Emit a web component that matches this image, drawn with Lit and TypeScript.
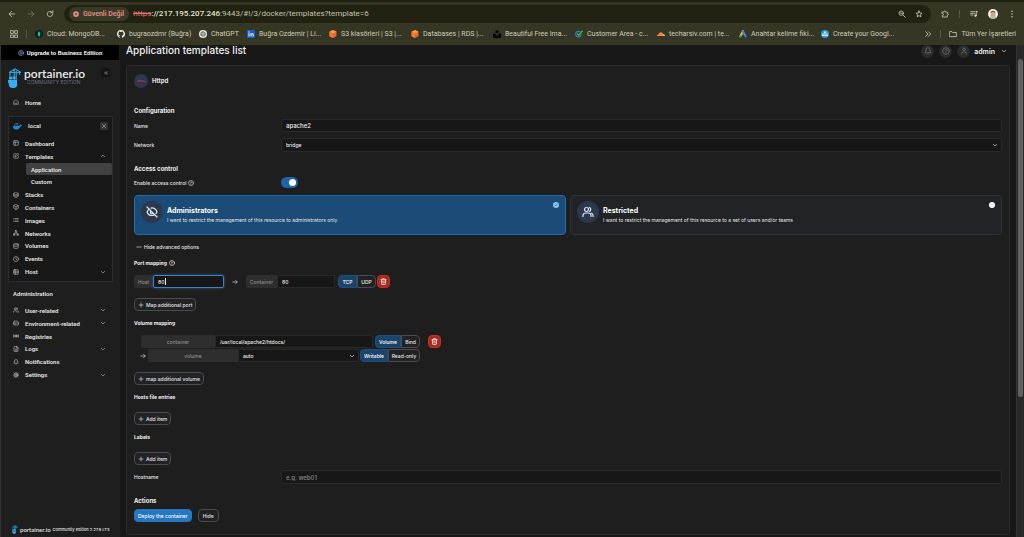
import { LitElement, html, css, svg, nothing } from "lit";
import { customElement, property } from "lit/decorators.js";

const glyphs: Record<string, unknown> = {
  back: svg`<path d="M20 12H4M11 4l-8 8 8 8"/>`,
  forward: svg`<path d="M4 12h16M13 4l8 8-8 8"/>`,
  reload: svg`<path d="M20 12a8 8 0 1 1-2.5-5.800"/><path d="M20.500 2v6.500H14" />`,
  grid: svg`<rect x="2" y="2" width="8" height="8"/><rect x="15" y="2" width="8" height="8"/><rect x="2" y="15" width="8" height="8"/><rect x="15" y="15" width="8" height="8"/>`,
  zoomOut: svg`<circle cx="9.500" cy="9.500" r="6.500"/><path d="M14.500 14.500 22 22M6.500 9.500h6"/>`,
  star: svg`<path d="m12 3 2.700 6 6.500.6-4.900 4.300 1.500 6.400L12 16.900l-5.800 3.400 1.500-6.400L2.800 9.600 9.300 9z"/>`,
  puzzle: svg`<path d="M4 6h5V5a2 2 0 0 1 4 0v1h6v5h1a2 2 0 0 1 0 4h-1v6H4v-5h1a2.500 2.500 0 0 0 0-5H4z"/>`,
  playlist: svg`<path d="M2 5h13M2 10h13M2 15h7M19 4v12M19 5h4"/><circle cx="16.500" cy="17" r="2.500" fill="currentColor"/>`,
  more: svg`<g fill="currentColor" stroke="none"><circle cx="12" cy="4" r="2.200"/><circle cx="12" cy="12" r="2.200"/><circle cx="12" cy="20" r="2.200"/></g>`,
  folder: svg`<path d="M2 5h7l2 2.500h11V20H2z"/>`,
  chevrons: svg`<path d="m5 5 7 7-7 7M13 5l7 7-7 7"/>`,
  chevronsLeft: svg`<path d="m11 17-5-5 5-5M18 17l-5-5 5-5"/>`,
  down: svg`<path d="m5 9 7 7 7-7"/>`,
  up: svg`<path d="m5 15 7-7 7 7"/>`,
  close: svg`<path d="M18 6 6 18M6 6l12 12"/>`,
  plusCircle: svg`<circle cx="12" cy="12" r="10"/><path d="M12 7v10M7 12h10"/>`,
  home: svg`<path d="M3 10 12 3l9 7v11H3zM8 17h8"/>`,
  layout: svg`<rect x="3" y="3" width="18" height="18" rx="2"/><path d="M3 9h18M9 21V9"/>`,
  edit: svg`<path d="M12 3H5a2 2 0 0 0-2 2v14a2 2 0 0 0 2 2h14a2 2 0 0 0 2-2v-7"/><path d="M18.400 2.600a2.100 2.100 0 0 1 3 3L12 15l-4 1 1-4z"/>`,
  layers: svg`<path d="m12 2 9 4.500v11L12 22l-9-4.500v-11zM3 7l9 4.500L21 7M3 12.500 12 17l9-4.500"/>`,
  box: svg`<path d="m12 2 9 5v10l-9 5-9-5V7zM3 7l9 5 9-5M12 12v10"/>`,
  list: svg`<path d="M8 6h13M8 12h13M8 18h13M3 6h.01M3 12h.01M3 18h.01"/>`,
  network: svg`<rect x="16" y="16" width="6" height="6" rx="1"/><rect x="2" y="16" width="6" height="6" rx="1"/><rect x="9" y="2" width="6" height="6" rx="1"/><path d="M5 16v-3a1 1 0 0 1 1-1h12a1 1 0 0 1 1 1v3M12 12V8"/>`,
  database: svg`<ellipse cx="12" cy="5" rx="9" ry="3"/><path d="M3 5v14c0 1.700 4 3 9 3s9-1.300 9-3V5M3 12c0 1.700 4 3 9 3s9-1.300 9-3"/>`,
  clock: svg`<circle cx="12" cy="12" r="10"/><path d="M12 6v6l3 3"/>`,
  host: svg`<rect x="3" y="3" width="18" height="18" rx="2"/><path d="M3 9h18M3 15h18M9 3v18"/>`,
  users: svg`<path d="M16 21v-2a4 4 0 0 0-4-4H6a4 4 0 0 0-4 4v2"/><circle cx="9" cy="7" r="4"/><path d="M22 21v-2a4 4 0 0 0-3-3.900M16 3.100a4 4 0 0 1 0 7.800"/>`,
  usersRound: svg`<path d="M18 21v-2a5 5 0 0 0-5-5H7a5 5 0 0 0-5 5v2"/><circle cx="9" cy="7" r="4"/><path d="M22 21v-2a5 5 0 0 0-3-4.500M14.500 3.100a4 4 0 0 1 0 7.800"/>`,
  drive: svg`<path d="M22 12H2M5.500 5.100 2 12v6a2 2 0 0 0 2 2h16a2 2 0 0 0 2-2v-6l-3.500-6.900A2 2 0 0 0 16.800 4H7.200a2 2 0 0 0-1.700 1.100zM6 16h4"/>`,
  radio: svg`<circle cx="12" cy="12" r="2"/><path d="M3 6v12M8 8v8M16 8v8M21 6v12M3 12h18"/>`,
  file: svg`<path d="M15 2H6a2 2 0 0 0-2 2v16a2 2 0 0 0 2 2h12a2 2 0 0 0 2-2V7zM14 2v6h6M8 13h8M8 17h8"/>`,
  bell: svg`<path d="M6 8a6 6 0 0 1 12 0c0 7 3 9 3 9H3s3-2 3-9M10.300 21a2 2 0 0 0 3.400 0"/>`,
  gear: svg`<circle cx="12" cy="12" r="3"/><circle cx="12" cy="12" r="7.500"/><path d="M12 1v3.500M12 19.500V23M1 12h3.500M19.500 12H23M4.200 4.200l2.500 2.500M17.300 17.300l2.500 2.500M4.200 19.800l2.500-2.500M17.300 6.700l2.500-2.500"/>`,
  help: svg`<circle cx="12" cy="12" r="10"/><path d="M9.100 9a3 3 0 0 1 5.800 1c0 2-3 3-3 3M12 17h.01"/>`,
  user: svg`<path d="M19 21v-2a4 4 0 0 0-4-4H9a4 4 0 0 0-4 4v2"/><circle cx="12" cy="7" r="4"/>`,
  eyeOff: svg`<path d="M9.900 4.200A10 10 0 0 1 22 12a14 14 0 0 1-2 3M6.600 6.600A14 14 0 0 0 2 12c1.500 4 5.500 7 10 7a10 10 0 0 0 5.400-1.600M9.900 9.900a3 3 0 1 0 4.200 4.200M2 2l20 20"/>`,
  check: svg`<path stroke-width="4" d="m5 12 5 5L19 7"/>`,
  plus: svg`<path d="M12 4v16M4 12h16"/>`,
  minus: svg`<path d="M3 12h18"/>`,
  arrow: svg`<path d="M3 12h18M14 5l7 7-7 7"/>`,
  trash: svg`<path d="M3 6h18M19 6v14a2 2 0 0 1-2 2H7a2 2 0 0 1-2-2V6M8 6V4a2 2 0 0 1 2-2h4a2 2 0 0 1 2 2v2M10 11v6M14 11v6"/>`,
  warn: svg`<circle cx="12" cy="12" r="8" stroke-width="7"/><path d="M12 9v6" />`,
};

@customElement("ui-icon")
class UiIcon extends LitElement {
  @property() name = "";
  static styles = css`
    :host { display: inline-flex; flex: none; width: 6px; height: 6px; }
    svg { width: 100%; height: 100%; display: block; fill: none; stroke: currentColor; stroke-width: 2.400; stroke-linecap: round; stroke-linejoin: round; }
  `;
  render() {
    return html`<svg viewBox="0 0 24 24" aria-hidden="true">${glyphs[this.name] ?? nothing}</svg>`;
  }
}

const crane = svg`<g fill="none" stroke="#2ea3dc" stroke-width="1.200"><path d="M1 4.500h12M1 4.500 7 1l6 3.500M6.200 1v9M8.200 1v14M2 4.500V8M11.500 4.500V7"/></g>
  <g fill="#37aef0"><rect x="1" y="8.500" width="3" height="3"/><rect x="4.500" y="8.500" width="3" height="3"/><rect x="0" y="12" width="9" height="3"/><path d="M1 15h8c1 3-1 5-4 5s-5-2-4-5z"/></g>`;

const brands: Record<string, unknown> = {
  mongo: svg`<circle cx="8" cy="8" r="8" fill="#07202b"/><path d="M8 2.500c4 4 3 8 0 10.500C5 10.500 4 6.500 8 2.500z" fill="#27c765"/><path d="M8 10v4" stroke="#27c765"/>`,
  github: svg`<path fill="#f2f2ea" d="M8 0a8 8 0 0 0-2.500 15.600c.4 0 .5-.2.5-.4v-1.500c-2.200.5-2.700-1-2.700-1-.4-.9-.9-1.200-.9-1.200-.7-.5 0-.5 0-.5.8.1 1.200.8 1.200.8.700 1.300 1.900.9 2.400.7 0-.5.300-.9.500-1.100-1.800-.2-3.600-.9-3.600-4 0-.9.300-1.600.8-2.200-.1-.2-.4-1 .1-2.100 0 0 .7-.2 2.200.8a7.500 7.500 0 0 1 4 0c1.500-1 2.200-.8 2.200-.8.400 1.100.1 1.900.1 2.100.5.600.8 1.300.8 2.200 0 3.100-1.900 3.800-3.700 4 .3.300.6.800.6 1.500v2.300c0 .2.100.5.500.4A8 8 0 0 0 8 0z"/>`,
  gpt: svg`<circle cx="8" cy="8" r="8" fill="#e9e9e4"/><g fill="none" stroke="#333" stroke-width="1.100"><path d="m8 3 4.300 2.500v5L8 13l-4.300-2.500v-5z"/><path d="m8 5.300 2.400 1.400v2.700L8 10.800 5.600 9.400V6.700zM8 3v2.300M12.300 10.500l-1.900-1.100M3.700 10.500l1.900-1.100"/></g>`,
  linkedin: svg`<rect width="16" height="16" rx="1" fill="#1660c4"/><g fill="#fff"><rect x="3" y="6.500" width="2" height="6.500"/><circle cx="4" cy="4" r="1.300"/><path d="M7 6.500h2v1c1-1.700 4.300-1.500 4.300 1.500v4h-2V9.500c0-1.800-2.300-1.700-2.300 0V13H7z"/></g>`,
  aws: svg`<path d="m8 0 7 3.500v9L8 16l-7-3.500v-9z" fill="#e8652a"/><path d="m8 0 7 3.500L8 7 1 3.500z" fill="#f7a04a"/><path d="M1 3.500 8 7v9l-7-3.500z" fill="#f07a31"/>`,
  unsplash: svg`<path fill="#000" d="M5 1h6v5H5zM0 7h5v4h6V7h5v9H0z"/>`,
  area: svg`<path d="M12.500 9a5.500 5.500 0 1 1-2-5" fill="none" stroke="#2a86c9" stroke-width="2.500"/><path d="m4.500 7 3 3.500L15 1.500" fill="none" stroke="#4db251" stroke-width="2.500"/>`,
  cloudflare: svg`<path d="M0 12c0-2 1.500-3 3-3 .5-3 3-5 5.500-4.500C10.500 5 11.500 6.500 12 8c2.500 0 4 2 4 4z" fill="#f2833a"/><path d="M11 12c0-2.500 1-4 2-3.500 2 .2 3 1.700 3 3.500z" fill="#f9b04a"/>`,
  ads: svg`<path d="M8 2.500 3 12" stroke="#f6b90c" stroke-width="4.500" stroke-linecap="round"/><path d="m8 3 5 9.500" stroke="#3f7ff0" stroke-width="4.500" stroke-linecap="round"/><circle cx="3" cy="12.500" r="2.500" fill="#34a853"/>`,
  sitemap: svg`<circle cx="8" cy="8" r="8" fill="#2a9fe0"/><g fill="#fff"><rect x="6.500" y="3" width="3" height="3"/><rect x="2.500" y="9" width="3" height="3"/><rect x="6.500" y="9" width="3" height="3"/><rect x="10.500" y="9" width="3" height="3"/><rect x="3.500" y="7" width="9" height="1"/></g>`,
};

const bookmarks: [string, string][] = [
  ["mongo", "Cloud: MongoDB..."],
  ["github", "bugraozdmr (Buğra)"],
  ["gpt", "ChatGPT"],
  ["linkedin", "Buğra Özdemir | Li..."],
  ["aws", "S3 klasörleri | S3 |..."],
  ["aws", "Databases | RDS |..."],
  ["unsplash", "Beautiful Free Ima..."],
  ["area", "Customer Area - c..."],
  ["cloudflare", "techarsiv.com | te..."],
  ["ads", "Anahtar kelime fiki..."],
  ["sitemap", "Create your Googl..."],
];

@customElement("browser-bar")
class BrowserBar extends LitElement {
  static styles = css`
    :host { display: block; flex: none; background: #353623; color: #cfcfba; border-top: 2px solid #202012; font-family: Roboto, "Liberation Sans", sans-serif; font-size: 7px; }
    button, a { all: unset; display: flex; align-items: center; cursor: pointer; white-space: nowrap; }
    .bar { display: flex; align-items: center; height: 18px; padding: 3px 8px 0; }
    .nav { display: flex; gap: 11px; width: 56px; }
    ui-icon { width: 8px; height: 8px; }
    .dim { color: #77785f; }
    .address { flex: 1; display: flex; align-items: center; height: 18px; border-radius: 9px; background: #222212; padding: 0 8px 0 5px; }
    .chip { height: 14px; border-radius: 7px; background: #393928; color: #e48f86; font-weight: 600; padding: 0 5px 0 4px; gap: 4px; margin-right: 4px; }
    .chip ui-icon { width: 6px; height: 6px; }
    .url { flex: 1; font-size: 8px; line-height: 12px; color: #c3c3ae; white-space: nowrap; outline: none; }
    .url s { color: #e0766c; }
    .url b { font-weight: 500; color: #e4e4d2; }
    .end { display: flex; gap: 9px; }
    .tools { display: flex; align-items: center; gap: 10px; padding-left: 10px; }
    .rule { width: 1px; height: 8px; background: #595a44; }
    .face { width: 10px; height: 10px; display: block; }
    .marks { display: flex; align-items: center; height: 22px; padding: 0 8px 0 10px; gap: 8px; }
    .list { flex: 1; display: grid; grid-template-columns: repeat(2, 82px) 48px repeat(8, 82px); overflow: hidden; min-width: 0; }
    .list a { gap: 4px; }
    .list svg { width: 8px; height: 8px; flex: none; }
    .folder { gap: 4px; }
  `;
  render() {
    return html`
      <div class="bar">
        <div class="nav">
          <button aria-label="Geri"><ui-icon name="back"></ui-icon></button>
          <button aria-label="İleri" class="dim"><ui-icon name="forward"></ui-icon></button>
          <button aria-label="Yenile"><ui-icon name="reload"></ui-icon></button>
        </div>
        <div class="address">
          <button class="chip"><ui-icon name="warn"></ui-icon>Güvenli Değil</button>
          <div class="url" role="textbox" aria-label="Adres"><s>https</s><b>://217.195.207.246</b>:9443/#!/3/docker/templates?template=6</div>
          <div class="end">
            <button aria-label="Yakınlaştırma"><ui-icon name="zoomOut"></ui-icon></button>
            <button aria-label="Yer işareti"><ui-icon name="star"></ui-icon></button>
          </div>
        </div>
        <div class="tools">
          <button aria-label="Uzantılar"><ui-icon name="puzzle"></ui-icon></button>
          <span class="rule"></span>
          <button aria-label="Medya"><ui-icon name="playlist"></ui-icon></button>
          <button aria-label="Profil"><svg class="face" viewBox="0 0 20 20"><circle cx="10" cy="10" r="10" fill="#f3f0ec"/><ellipse cx="10" cy="10" rx="5" ry="6.500" fill="#cfa48e"/><path d="M5 8c0-6 10-6 10 0-1-3-9-3-10 0z" fill="#6d5548"/><path d="M2.500 16.500C5 14 15 14 17.500 16.500 14 21 6 21 2.500 16.500z" fill="#b9b5b0"/></svg></button>
          <button aria-label="Menü"><ui-icon name="more"></ui-icon></button>
        </div>
      </div>
      <div class="marks">
        <button aria-label="Uygulamalar"><ui-icon name="grid"></ui-icon></button>
        <span class="rule"></span>
        <nav class="list">
          ${bookmarks.map(([icon, text]) => html`<a href="#"><svg viewBox="0 0 16 16" aria-hidden="true">${brands[icon]}</svg>${text}</a>`)}
        </nav>
        <button aria-label="Diğer"><ui-icon name="chevrons"></ui-icon></button>
        <span class="rule"></span>
        <button class="folder"><ui-icon name="folder"></ui-icon>Tüm Yer İşaretleri</button>
      </div>
    `;
  }
}

type Item = { icon?: string; text: string; arrow?: "up" | "down"; sub?: boolean; on?: boolean };

const environmentItems: Item[] = [
  { icon: "layout", text: "Dashboard" },
  { icon: "edit", text: "Templates", arrow: "up" },
  { text: "Application", sub: true, on: true },
  { text: "Custom", sub: true },
  { icon: "layers", text: "Stacks" },
  { icon: "box", text: "Containers" },
  { icon: "list", text: "Images" },
  { icon: "network", text: "Networks" },
  { icon: "database", text: "Volumes" },
  { icon: "clock", text: "Events" },
  { icon: "host", text: "Host", arrow: "down" },
];

const adminItems: Item[] = [
  { icon: "users", text: "User-related", arrow: "down" },
  { icon: "drive", text: "Environment-related", arrow: "down" },
  { icon: "radio", text: "Registries" },
  { icon: "file", text: "Logs", arrow: "down" },
  { icon: "bell", text: "Notifications" },
  { icon: "gear", text: "Settings", arrow: "down" },
];

@customElement("side-bar")
class SideBar extends LitElement {
  static styles = css`
    :host { display: flex; flex-direction: column; flex: none; box-sizing: border-box; width: 120px; background: #1e1e1e; border-left: 1px solid #333; color: #e4e4e4; font-family: Roboto, "Liberation Sans", sans-serif; font-size: 6px; font-weight: 600; }
    button, a { all: unset; cursor: pointer; white-space: nowrap; }
    .upgrade { display: flex; align-items: center; justify-content: center; gap: 3px; height: 15px; background: #000; color: #fff; margin-right: 1px; }
    .upgrade ui-icon { color: #9fb4d8; }
    .brand { box-sizing: border-box; display: flex; align-items: flex-start; padding: 8px 10px 0 7px; height: 22px; }
    .crane { width: 14px; height: 20px; flex: none; }
    .words { flex: 1; padding-left: 2px; }
    .name { font: 600 12px/12px Lato, sans-serif; color: #ececec; }
    .edition { font: 400 5px/5px Inter, sans-serif; color: #6b7280; padding-left: 3px; white-space: nowrap; }
    .square { display: flex; align-items: center; justify-content: center; width: 9px; height: 9px; border-radius: 2px; background: #141414; color: #bbb; }
    .square.light { width: 8px; height: 8px; background: #333; }
    .item { display: flex; align-items: center; gap: 6px; padding: 0 6px 0 4px; }
    .item ui-icon { color: #b9b9b9; }
    .item span { flex: 1; }
    .home { margin: 14px 0 0 8px; height: 12px; }
    .env { margin: 8px 7px 0; border: 1px solid #2a2c30; background: #181818; padding-bottom: 3px; }
    .head { display: flex; align-items: center; height: 17px; padding: 0 4px 3px; gap: 6px; }
    .head span { flex: 1; }
    .whale { width: 9px; height: 8px; }
    .tree { display: grid; grid-auto-rows: 1fr; height: 141px; }
    .sub { margin-left: 17px; padding: 0 5px; border-radius: 2px; }
    .on { background: #424242; }
    .title { margin: 8px 0 0 12px; line-height: 8px; }
    .admin { display: grid; grid-auto-rows: 1fr; height: 77px; margin: 6px 8px 0; }
    .foot { margin-top: auto; display: flex; align-items: center; height: 9px; padding: 0 0 3px 11px; gap: 2px; font-family: Inter, sans-serif; font-size: 4px; font-weight: 500; white-space: nowrap; }
    .foot svg { width: 6px; height: 9px; flex: none; }
    .foot b { font: 600 6px/8px Lato, sans-serif; }
  `;
  row(i: Item) {
    return html`<a href="#" class="item ${i.sub ? "sub" : ""} ${i.on ? "on" : ""}">
      ${i.icon ? html`<ui-icon name=${i.icon}></ui-icon>` : nothing}<span>${i.text}</span>
      ${i.arrow ? html`<ui-icon name=${i.arrow}></ui-icon>` : nothing}</a>`;
  }
  render() {
    return html`
      <button class="upgrade"><ui-icon name="plusCircle"></ui-icon>Upgrade to Business Edition</button>
      <div class="brand">
        <svg class="crane" viewBox="0 0 14 20" aria-hidden="true">${crane}</svg>
        <div class="words"><div class="name">portainer.io</div><div class="edition">COMMUNITY EDITION</div></div>
        <button class="square" aria-label="Collapse"><ui-icon name="chevronsLeft"></ui-icon></button>
      </div>
      <a href="#" class="item home"><ui-icon name="home"></ui-icon><span>Home</span></a>
      <section class="env">
        <div class="head">
          <svg class="whale" viewBox="0 0 18 16" aria-hidden="true"><path fill="#2186d8" d="M0 8h13c0-2 .5-3 1.500-4 1 .8 1.500 1.700 1.300 2.800.8-.2 1.600 0 2.200.4-.6 1.500-1.700 1.800-3 1.800-1.500 4-4.500 6-8.500 6C2.500 15 0 13 0 8zM2 5h2v2H2zM5 5h2v2H5zM8 5h2v2H8zM5 2h2v2H5zM8 2h2v2H8z"/></svg>
          <span>local</span>
          <button class="square light" aria-label="Disconnect"><ui-icon name="close"></ui-icon></button>
        </div>
        <nav class="tree">${environmentItems.map((i) => this.row(i))}</nav>
      </section>
      <div class="title">Administration</div>
      <nav class="admin">${adminItems.map((i) => this.row(i))}</nav>
      <div class="foot"><svg viewBox="0 0 14 20" aria-hidden="true">${crane}</svg><b>portainer.io</b><span>Community Edition 2.27.6 LTS</span></div>
    `;
  }
}

@customElement("template-form")
class TemplateForm extends LitElement {
  static styles = css`
    :host { display: block; box-sizing: border-box; border: 1px solid #2b2b2b; border-radius: 3px; background: #1e1e1e; padding: 8px 7px 12px; color: #e6e6e6; font-size: 5px; line-height: 8px; font-weight: 500; }
    * { box-sizing: border-box; }
    h2, h3 { margin: 0; font-weight: 700; color: #f2f2f2; display: flex; align-items: center; gap: 2px; }
    h2 { font-size: 6px; line-height: 10px; margin: 12px 0 3px; }
    h3 { font-size: 5px; line-height: 8px; margin: 8px 0; }
    h3.list { margin-bottom: 11px; }
    input, select, button { font: inherit; color: inherit; margin: 0; }
    input[type="text"], select { flex: 1; min-width: 0; width: 100%; height: 100%; background: #171717; border: 1px solid #292929; border-radius: 2px; padding: 0 4px; outline: none; appearance: none; color: #f0f0f0; }
    .row input[type="text"] { font-size: 6px; }
    input::placeholder { color: #8a8a8a; opacity: 1; }
    button { display: inline-flex; align-items: center; justify-content: center; gap: 2px; height: 13px; padding: 0 3px; border: 1px solid #4b4b4b; border-radius: 4px; background: #212225; white-space: nowrap; cursor: pointer; }
    .head { display: flex; align-items: center; gap: 4px; height: 14px; font-size: 6px; font-weight: 700; }
    .logo { width: 14px; height: 14px; }
    h2.first { margin-top: 18px; }
    .row { display: grid; grid-template-columns: 147px 1fr; align-items: center; height: 14px; }
    .row.name { height: 13px; margin-bottom: 6px; }
    .row.switch { height: 11px; }
    .hint { display: flex; align-items: center; gap: 2px; }
    .pick { position: relative; display: flex; height: 100%; }
    .pick ui-icon { position: absolute; right: 4px; top: 4px; pointer-events: none; }
    .toggle { appearance: none; width: 17px; height: 11px; border-radius: 6px; background: #1f65a6; display: block; }
    .toggle::before { content: ""; display: block; width: 7px; height: 7px; border-radius: 50%; background: #fff; margin: 2px 0 0 8px; }
    .cards { display: grid; grid-template-columns: 1fr 1fr; gap: 4px; margin: 7px 0 8px; }
    .card { position: relative; display: flex; gap: 4px; height: 40px; padding: 5px 6px; border: 1px solid #303338; border-radius: 4px; background: #222327; color: #e8e8e8; }
    .card.on { background: #1b4c77; border-color: #1f6cab; }
    .disc { display: flex; align-items: center; justify-content: center; flex: none; width: 22px; height: 22px; border-radius: 50%; background: #2e384c; color: #dbe6f5; }
    .disc ui-icon { width: 12px; height: 12px; }
    .text { flex: 1; padding-top: 5px; }
    .text b { display: block; font-size: 7px; line-height: 10px; font-weight: 700; color: #fff; }
    .text span { display: block; font-weight: 400; }
    .card input { appearance: none; flex: none; width: 6px; height: 6px; border-radius: 50%; background: #fff; margin-top: 1px; }
    .card.on input { background: #8cc4f2; }
    .tick { position: absolute; right: 7px; top: 7px; width: 4px; height: 4px; color: #124a7c; }
    .plain { border: 0; background: none; height: 8px; padding: 0 2px; display: flex; }
    .line { display: flex; align-items: center; height: 13px; }
    .addon { height: 13px; display: flex; align-items: center; justify-content: center; background: #2e2e2e; border-radius: 2px 0 0 2px; color: #8f8f8f; }
    .addon.host { width: 19px; }
    .addon.cont { width: 31px; }
    .addon.path { width: 74px; margin-left: 7px; }
    .addon.vol { width: 90px; }
    .port { position: relative; width: 71px; height: 13px; }
    .port input[type="text"] { display: block; border-color: #3f83c7; box-shadow: 0 0 3px #2f5f90; }
    .caret { position: absolute; left: 12px; top: 3px; width: 1px; height: 7px; background: #e8e8e8; }
    .cport { width: 58px; height: 13px; margin-right: 3px; display: flex; }
    .apath { width: 158px; height: 13px; margin-right: 2px; display: flex; }
    .avol { width: 121px; height: 13px; margin-right: 1px; }
    .mid { width: 22px; display: flex; justify-content: center; }
    .lead { width: 14px; padding-left: 6px; display: flex; }
    .pair { display: flex; }
    .pair button { padding: 0; }
    .pair button:first-child { border-radius: 4px 0 0 4px; background: #1b4469; border-color: #1f4f7a; color: #fff; }
    .pair button:last-child { border-radius: 0 4px 4px 0; }
    .ports .pair button { width: 19px; }
    .mount .pair button:first-child { width: 26px; }
    .mount .pair button:last-child { width: 19px; }
    .mode .pair button:first-child { width: 28px; }
    .mode .pair button:last-child { width: 32px; }
    .danger { width: 13px; padding: 0; background: #a92a20; border-color: #bb3227; color: #fff; margin-left: 1px; }
    .danger ui-icon { width: 7px; height: 7px; }
    .mount .danger { margin-left: 8px; }
    .mode { margin-top: 1px; }
    .add { margin-top: 10px; }
    .add.item { margin-top: 0; display: flex; }
    .row.hostname { margin-top: 5px; }
    .actions { display: flex; gap: 6px; }
    .actions button { padding: 0 4px; }
    .actions .primary { padding: 0 3px; background: #2577bf; border-color: #2577bf; color: #fff; }
    .block { display: flex; }
  `;
  render() {
    return html`
      <div class="head">
        <svg class="logo" viewBox="0 0 14 14" aria-hidden="true"><circle cx="7" cy="7" r="7" fill="#2e384c"/><path d="M3.500 6.800 8 7l3 .5" stroke="#c22b62" stroke-width="1.200" fill="none"/></svg>Httpd
      </div>
      <h2 class="first">Configuration</h2>
      <div class="row name"><label for="name">Name</label><input id="name" type="text" value="apache2" /></div>
      <div class="row net">
        <label for="net">Network</label>
        <div class="pick"><select id="net"><option>bridge</option></select><ui-icon name="down"></ui-icon></div>
      </div>
      <h2>Access control</h2>
      <div class="row switch">
        <label class="hint" for="acl">Enable access control <ui-icon name="help"></ui-icon></label>
        <input id="acl" class="toggle" type="checkbox" checked />
      </div>
      <div class="cards">
        <label class="card on">
          <span class="disc"><ui-icon name="eyeOff"></ui-icon></span>
          <span class="text"><b>Administrators</b><span>I want to restrict the management of this resource to administrators only</span></span>
          <input type="radio" name="owner" checked /><ui-icon class="tick" name="check"></ui-icon>
        </label>
        <label class="card">
          <span class="disc"><ui-icon name="usersRound"></ui-icon></span>
          <span class="text"><b>Restricted</b><span>I want to restrict the management of this resource to a set of users and/or teams</span></span>
          <input type="radio" name="owner" />
        </label>
      </div>
      <button class="plain"><ui-icon name="minus"></ui-icon>Hide advanced options</button>
      <h3>Port mapping <ui-icon name="help"></ui-icon></h3>
      <div class="line ports">
        <label class="addon host" for="host">Host</label>
        <div class="port"><input id="host" type="text" value="80" /><span class="caret"></span></div>
        <span class="mid"><ui-icon name="arrow"></ui-icon></span>
        <label class="addon cont" for="cport">Container</label>
        <div class="cport"><input id="cport" type="text" value="80" /></div>
        <div class="pair"><button>TCP</button><button>UDP</button></div>
        <button class="danger" aria-label="Remove port"><ui-icon name="trash"></ui-icon></button>
      </div>
      <div class="block"><button class="add"><ui-icon name="plus"></ui-icon>Map additional port</button></div>
      <h3>Volume mapping</h3>
      <div class="line mount">
        <label class="addon path" for="path">container</label>
        <div class="apath"><input id="path" type="text" value="/usr/local/apache2/htdocs/" /></div>
        <div class="pair"><button>Volume</button><button>Bind</button></div>
        <button class="danger" aria-label="Remove volume"><ui-icon name="trash"></ui-icon></button>
      </div>
      <div class="line mode">
        <span class="lead"><ui-icon name="arrow"></ui-icon></span>
        <label class="addon vol" for="vol">volume</label>
        <div class="avol pick"><select id="vol"><option>auto</option></select><ui-icon name="down"></ui-icon></div>
        <div class="pair"><button>Writable</button><button>Read-only</button></div>
      </div>
      <div class="block"><button class="add"><ui-icon name="plus"></ui-icon>map additional volume</button></div>
      <h3 class="list">Hosts file entries</h3>
      <button class="add item"><ui-icon name="plus"></ui-icon>Add item</button>
      <h3 class="list">Labels</h3>
      <button class="add item"><ui-icon name="plus"></ui-icon>Add item</button>
      <div class="row hostname"><label for="hostname">Hostname</label><input id="hostname" type="text" placeholder="e.g. web01" /></div>
      <h2>Actions</h2>
      <div class="actions"><button class="primary">Deploy the container</button><button>Hide</button></div>
    `;
  }
}

@customElement("app-root")
class AppRoot extends LitElement {
  static styles = css`
    :host { display: flex; flex-direction: column; height: 100vh; overflow: hidden; background: #181818; font-family: Inter, "Liberation Sans", sans-serif; color: #f0f0f0; }
    .page { flex: 1; display: flex; min-height: 0; }
    main { flex: 1; min-width: 0; padding: 0 6px; overflow: hidden; }
    header { display: flex; justify-content: space-between; height: 20px; padding-right: 3px; }
    h1 { margin: 0; font-size: 10px; line-height: 11px; font-weight: 500; }
    .account { display: flex; align-items: center; height: 12px; gap: 5px; font-size: 7px; font-weight: 600; }
    .account button { all: unset; display: flex; align-items: center; justify-content: center; width: 13px; height: 13px; border-radius: 50%; background: #2b2b2b; color: #6d6d6d; cursor: pointer; }
    .account button ui-icon { width: 8px; height: 8px; }
    .account .menu { width: auto; background: none; color: #f0f0f0; gap: 6px; margin-left: -1px; }
    .account .menu ui-icon { width: 6px; height: 6px; }
    .scroll { flex: none; width: 8px; background: #292929; padding: 14px 1px 0; box-sizing: border-box; border-left: 1px solid #343434; }
    .thumb { height: 338px; border-radius: 3px; background: #606060; }
  `;
  render() {
    return html`
      <browser-bar></browser-bar>
      <div class="page">
        <side-bar></side-bar>
        <main>
          <header>
            <h1>Application templates list</h1>
            <div class="account">
              <button aria-label="Notifications"><ui-icon name="bell"></ui-icon></button>
              <button aria-label="Help"><ui-icon name="help"></ui-icon></button>
              <button aria-label="User"><ui-icon name="user"></ui-icon></button>
              <button class="menu">admin<ui-icon name="down"></ui-icon></button>
            </div>
          </header>
          <template-form></template-form>
        </main>
        <div class="scroll"><div class="thumb"></div></div>
      </div>
    `;
  }
}
